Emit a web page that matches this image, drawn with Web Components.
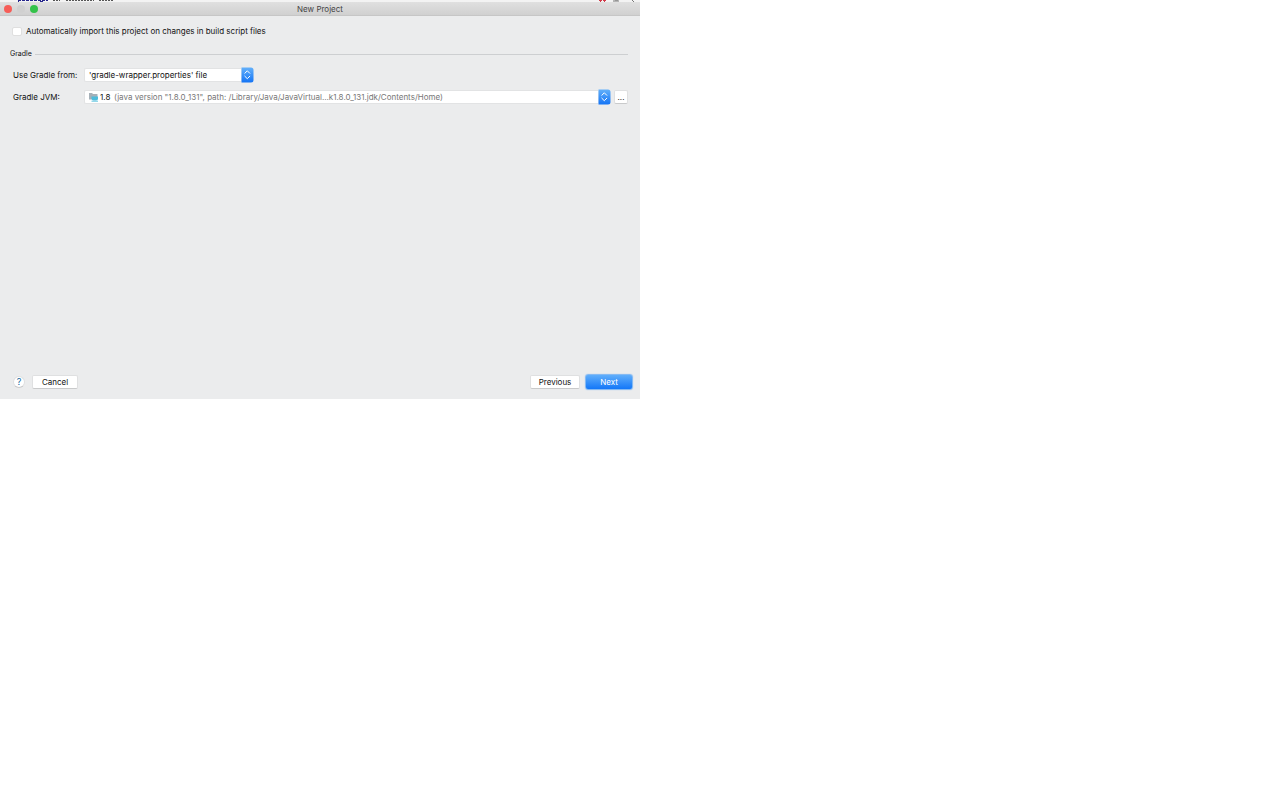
<!DOCTYPE html>
<html lang="en">
<head>
<meta charset="utf-8">
<title>New Project</title>
<style>
  body { margin: 0; background: #fff; font: 8px/12px Inter, "Liberation Sans", Arial, sans-serif; color: #111; }
</style>
</head>
<body>
<project-wizard></project-wizard>

<script>
const define = (name, html, setup) => customElements.define(name, class extends HTMLElement {
  constructor() {
    super();
    this.attachShadow({ mode: "open" }).innerHTML = html;
  }
  connectedCallback() { if (setup) setup(this, this.shadowRoot); }
});

define("editor-strip", `
  <style>
    :host { display: flex; justify-content: space-between; height: 2px; padding: 0 4px 0 17px; background: #f3f3f3; }
    svg { display: block; }
  </style>
  <svg width="98" height="2" viewBox="0 0 98 2" aria-hidden="true">
    <path d="M1 .5h30" stroke="#26268c" stroke-dasharray="3 1"/>
    <path d="M1 1.5h1M23 1.5h3" stroke="#26268c"/>
    <path d="M36 .5h7M49 .5h28M82 .5h14" stroke="#555" stroke-dasharray="2 1"/>
  </svg>
  <svg width="38" height="2" viewBox="0 0 38 2" aria-hidden="true">
    <path d="M1 0h3v1h-1v1h-1v-1h-1zM5 0h3v1h-1v1h-1v-1h-1z" fill="#d03a48"/>
    <path d="M15 1h6M17 0h3" stroke="#777" fill="none"/>
    <path d="M34 0l2 2" stroke="#777"/>
  </svg>`);

define("title-bar", `
  <style>
    :host { display: grid; grid-template-columns: 1fr auto 1fr; align-items: center; height: 14px; padding: 0 4px; box-sizing: border-box; background: linear-gradient(#e0e0e0, #d0d0d0); border-bottom: 1px solid #c6c6c6; color: #444; }
    .lights { display: flex; gap: 5px; }
    button { width: 8px; height: 8px; padding: 0; border: 0; border-radius: 50%; background: #d4d4d4; }
    .close { background: #f65d58; }
    .min { background: #d0d0d0; }
    .zoom { background: #34c24a; }
    h1 { margin: 0; font: inherit; }
  </style>
  <div class="lights">
    <button class="close" aria-label="Close"></button>
    <button class="min" aria-label="Minimize" disabled></button>
    <button class="zoom" aria-label="Zoom"></button>
  </div>
  <h1><slot></slot></h1>`);

define("check-option", `
  <style>
    :host { display: block; }
    label { display: flex; align-items: center; gap: 4px; }
    input { appearance: none; width: 10px; height: 9px; margin: 0; background: #fff; border: 1px solid #dfdfdf; border-radius: 2px; }
    input:checked { background: #2f8cf5; }
  </style>
  <label><input type="checkbox"><span><slot></slot></span></label>`);

define("group-title", `
  <style>
    :host { display: flex; align-items: center; gap: 3px; font-size: 7px; }
    :host::after { content: ""; flex: 1; height: 1px; background: #cdcfd1; }
  </style>
  <slot></slot>`);

define("combo-field", `
  <style>
    :host { display: grid; grid-template-columns: 71px minmax(0, 1fr); align-items: center; }
    .row { display: flex; gap: 3px; }
    .box { display: grid; grid-template-columns: auto minmax(0, 1fr) 13px; align-items: center; height: 16px; width: var(--combo-width, auto); flex: var(--combo-flex, 1); }
    select { grid-area: 1 / 1 / 2 / 3; width: 100%; height: 14px; appearance: none; margin: 0; padding: 0 0 0 var(--combo-inset, 4px); border: 1px solid #e2e3e4; border-right: 0; border-radius: 2px 0 0 2px; background: #fff; font: inherit; color: #111; outline: 0; }
    .lead { grid-area: 1 / 1; display: flex; align-items: center; gap: 15px; padding-left: 5px; pointer-events: none; color: #777; white-space: nowrap; z-index: 1; }
    .arrows { grid-area: 1 / 3; display: block; pointer-events: none; }
  </style>
  <label for="pick"></label>
  <div class="row">
    <div class="box">
      <select id="pick"></select>
      <span class="lead"><slot name="icon"></slot><slot name="note"></slot></span>
      <svg class="arrows" width="13" height="16" viewBox="0 0 13 16" aria-hidden="true">
        <defs><linearGradient id="g" x2="0" y2="1"><stop stop-color="#63b0fa"/><stop offset="1" stop-color="#1474f5"/></linearGradient></defs>
        <path d="M0.5 0.5h9.5a2.5 2.5 0 0 1 2.5 2.5v10a2.5 2.5 0 0 1-2.5 2.5h-9.5z" fill="url(#g)"/>
        <path d="M3.8 6.3L6.3 3.8L8.8 6.3M3.8 9.2L6.3 11.7L8.8 9.2" fill="none" stroke="#fff" stroke-width="1" stroke-linecap="round" stroke-linejoin="round"/>
      </svg>
    </div>
    <slot name="after"></slot>
  </div>`, (host, root) => {
    root.querySelector("label").textContent = host.getAttribute("label");
    root.querySelector("select").replaceChildren(new Option(host.getAttribute("value")));
  });

define("jdk-icon", `
  <style>:host { display: block; } svg { display: block; }</style>
  <svg width="10" height="10" viewBox="0 0 10 10" aria-hidden="true">
    <path d="M0 1h3l1 1h4.5v5.5h-8.5z" fill="#a5b0b8"/>
    <path d="M2.5 4.5h6.5v2a2 2 0 0 1-2 2h-2.5a2 2 0 0 1-2-2z" fill="#4cbcdc"/>
    <path d="M2.5 9.2h6.5" stroke="#65c5df" stroke-width="1"/>
  </svg>`);

define("push-button", `
  <style>
    :host { display: block; }
    button { display: block; box-sizing: border-box; width: var(--button-width, 46px); height: 14px; padding: 0; border: 1px solid #dfe0e1; border-bottom-color: #c9cacb; border-radius: 2px; background: #fff; font: inherit; line-height: 12px; color: #111; }
    :host([kind="primary"]) button { height: 16px; width: 48px; line-height: 14px; border-color: #85baf3; border-radius: 3px; background: linear-gradient(#60aefb, #1377f8); color: #fff; box-shadow: 0 0 1px #7ab5f5; }
    :host([kind="help"]) button { width: 12px; height: 12px; line-height: 10px; border-radius: 50%; font-size: 9px; color: #17699f; }
  </style>
  <button type="button"><slot></slot></button>`);

define("project-wizard", `
  <style>
    :host { display: flex; flex-direction: column; width: 50%; min-height: 50vh; background: #ebeced; }
    main { flex: 1; padding: 9px 12px 0; }
    group-title { margin: 11px 0 7px -2px; }
    .fields { display: grid; gap: 6px; padding-left: 1px; }
    .source { --combo-width: 170px; --combo-flex: none; }
    .jvm { --combo-inset: 15px; }
    .more { --button-width: 14px; align-self: center; }
    footer { display: flex; align-items: center; gap: 5px; padding: 0 7px 9px 13px; }
    .cancel { margin-left: 2px; }
    .previous { --button-width: 50px; margin-left: auto; }
  </style>
  <editor-strip></editor-strip>
  <title-bar>New Project</title-bar>
  <main>
    <check-option>Automatically import this project on changes in build script files</check-option>
    <group-title>Gradle</group-title>
    <div class="fields">
      <combo-field class="source" label="Use Gradle from:" value="'gradle-wrapper.properties' file"></combo-field>
      <combo-field class="jvm" label="Gradle JVM:" value="1.8">
        <jdk-icon slot="icon"></jdk-icon>
        <span slot="note">(java version "1.8.0_131", path: /Library/Java/JavaVirtual...k1.8.0_131.jdk/Contents/Home)</span>
        <push-button class="more" slot="after">...</push-button>
      </combo-field>
    </div>
  </main>
  <footer>
    <push-button kind="help">?</push-button>
    <push-button class="cancel">Cancel</push-button>
    <push-button class="previous">Previous</push-button>
    <push-button kind="primary">Next</push-button>
  </footer>`);
</script>
</body>
</html>
